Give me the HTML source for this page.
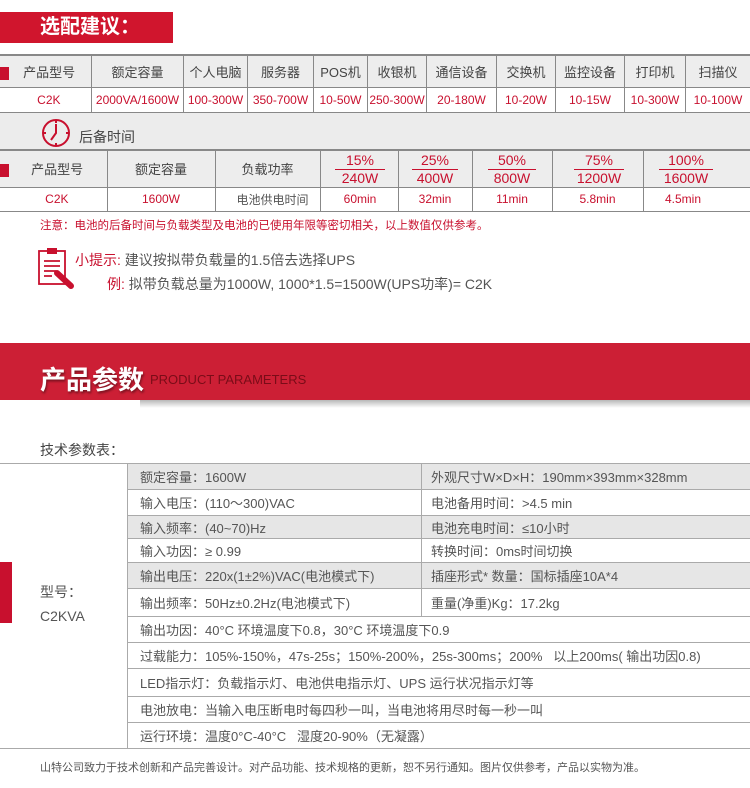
<!DOCTYPE html>
<html><head><meta charset="utf-8"><style>
*{margin:0;padding:0;box-sizing:border-box}
body{width:750px;height:788px;position:relative;background:#fff;font-family:"Liberation Sans","Noto Sans CJK SC",sans-serif;overflow:hidden;color:#555}
.a{position:absolute}
.t{position:absolute;white-space:nowrap}
.c{position:absolute;display:flex;align-items:center;justify-content:center;white-space:nowrap;border-right:1px solid #888}
.hl{position:absolute;left:0;width:750px;height:1px;background:#888}
.r{color:#c8102e}
.row{position:absolute;left:127px;border-bottom:1px solid #aaa;border-left:1px solid #aaa;font-size:13px;color:#555;display:flex;align-items:center;padding-left:12px;white-space:nowrap}
.g{background:#e6e6e6}
</style></head><body>
<div class="a" style="left:0;top:12px;width:173px;height:31px;background:#d0152d"></div>
<div class="t" style="left:40px;top:14px;font-size:20px;font-weight:bold;color:#fff;line-height:27px">选配建议：</div>

<div class="a g" style="left:0;top:55px;width:750px;height:32px;background:#ededed"></div>
<div class="hl" style="top:54px;height:2px"></div>
<div class="hl" style="top:87px"></div>
<div class="hl" style="top:112px"></div>
<div class="a" style="left:0;top:67px;width:9px;height:13px;background:#c8102e"></div>
<div style="position:absolute;top:55px;left:0;height:57px;width:750px;font-size:13px;color:#444">
<div class="c" style="left:0;width:92px;height:32px">&nbsp;&nbsp;产品型号</div>
<div class="c" style="left:92px;width:92px;height:32px">额定容量</div>
<div class="c" style="left:184px;width:64px;height:32px">个人电脑</div>
<div class="c" style="left:248px;width:66px;height:32px">服务器</div>
<div class="c" style="left:314px;width:54px;height:32px">POS机</div>
<div class="c" style="left:368px;width:59px;height:32px">收银机</div>
<div class="c" style="left:427px;width:70px;height:32px">通信设备</div>
<div class="c" style="left:497px;width:59px;height:32px">交换机</div>
<div class="c" style="left:556px;width:69px;height:32px">监控设备</div>
<div class="c" style="left:625px;width:61px;height:32px">打印机</div>
<div class="c" style="left:686px;width:64px;height:32px;border-right:0">扫描仪</div>
</div>
<div class="r" style="position:absolute;top:87px;left:0;height:25px;width:750px;font-size:12px">
<div class="c" style="left:0;width:92px;height:25px">&nbsp;&nbsp;C2K</div>
<div class="c" style="left:92px;width:92px;height:25px">2000VA/1600W</div>
<div class="c" style="left:184px;width:64px;height:25px">100-300W</div>
<div class="c" style="left:248px;width:66px;height:25px">350-700W</div>
<div class="c" style="left:314px;width:54px;height:25px">10-50W</div>
<div class="c" style="left:368px;width:59px;height:25px">250-300W</div>
<div class="c" style="left:427px;width:70px;height:25px">20-180W</div>
<div class="c" style="left:497px;width:59px;height:25px">10-20W</div>
<div class="c" style="left:556px;width:69px;height:25px">10-15W</div>
<div class="c" style="left:625px;width:61px;height:25px">10-300W</div>
<div class="c" style="left:686px;width:64px;height:25px;border-right:0">10-100W</div>
</div>

<div class="a" style="left:0;top:113px;width:750px;height:37px;background:#ececec"></div>
<svg class="a" style="left:40px;top:118px" width="32" height="30" viewBox="0 0 32 30"><circle cx="16" cy="15" r="13" fill="none" stroke="#c8102e" stroke-width="2"/><path d="M16 6V15L11 22" fill="none" stroke="#c8102e" stroke-width="2"/><path d="M16 2v3M16 25v3M3 15h3M26 15h3" stroke="#c8102e" stroke-width="2"/></svg>
<div class="t" style="left:79px;top:127px;font-size:14px;color:#444">后备时间</div>

<div class="a" style="left:0;top:150px;width:750px;height:37px;background:#ededed"></div>
<div class="hl" style="top:149px;height:2px"></div>
<div class="hl" style="top:187px"></div>
<div class="hl" style="top:211px"></div>
<div class="a" style="left:0;top:164px;width:9px;height:13px;background:#c8102e"></div>
<div style="position:absolute;top:150px;left:0;width:750px;height:37px;font-size:13px;color:#444">
<div class="c" style="left:0;width:107px;height:37px;border:0">&nbsp;&nbsp;产品型号</div>
<div class="c" style="left:107px;width:108px;height:37px;border:0">额定容量</div>
<div class="c" style="left:215px;width:105px;height:37px;border:0">负载功率</div>
</div>
<div class="a" style="left:320px;top:150px;width:1px;height:61px;background:#888"></div>
<div class="a" style="left:107px;top:150px;width:1px;height:61px;background:#888"></div>
<div class="a" style="left:215px;top:150px;width:1px;height:61px;background:#888"></div>
<div class="a" style="left:398px;top:150px;width:1px;height:61px;background:#888"></div>
<div class="a" style="left:472px;top:150px;width:1px;height:61px;background:#888"></div>
<div class="a" style="left:552px;top:150px;width:1px;height:61px;background:#888"></div>
<div class="a" style="left:643px;top:150px;width:1px;height:61px;background:#888"></div>
<div class="r" style="position:absolute;top:150px;left:0;width:750px;font-size:14px;line-height:17px;text-align:center">
<div class="a" style="left:335px;top:2px;width:50px"><div>15%</div><div style="border-top:1px solid #c8102e">240W</div></div>
<div class="a" style="left:412px;top:2px;width:46px"><div>25%</div><div style="border-top:1px solid #c8102e">400W</div></div>
<div class="a" style="left:488px;top:2px;width:48px"><div>50%</div><div style="border-top:1px solid #c8102e">800W</div></div>
<div class="a" style="left:574px;top:2px;width:50px"><div>75%</div><div style="border-top:1px solid #c8102e">1200W</div></div>
<div class="a" style="left:659px;top:2px;width:54px"><div>100%</div><div style="border-top:1px solid #c8102e">1600W</div></div>
</div>
<div class="r" style="position:absolute;top:187px;left:0;width:750px;height:24px;font-size:12px">
<div class="c" style="left:0;width:107px;height:24px;border:0">&nbsp;&nbsp;C2K</div>
<div class="c" style="left:107px;width:108px;height:24px;border:0">1600W</div>
<div class="c" style="left:215px;width:115px;height:24px;border:0;color:#555">电池供电时间</div>
<div class="c" style="left:320px;width:78px;height:24px;border:0;padding-left:2px">60min</div>
<div class="c" style="left:398px;width:74px;height:24px;border:0">32min</div>
<div class="c" style="left:472px;width:80px;height:24px;border:0">11min</div>
<div class="c" style="left:552px;width:91px;height:24px;border:0">5.8min</div>
<div class="c" style="left:643px;width:80px;height:24px;border:0">4.5min</div>
</div>
<div class="t r" style="left:40px;top:217px;font-size:11.5px">注意：电池的后备时间与负载类型及电池的已使用年限等密切相关，以上数值仅供参考。</div>

<svg class="a" style="left:37px;top:246px" width="38" height="44" viewBox="0 0 38 44"><rect x="2" y="5" width="26" height="33" fill="#fff" stroke="#c8102e" stroke-width="1.8"/><rect x="10" y="2" width="10" height="6" fill="#c8102e"/><path d="M7 15h16M7 20h16M7 25h12M7 30h8" stroke="#c8102e" stroke-width="1.8"/><path d="M20 27l14 13" stroke="#c8102e" stroke-width="6" stroke-linecap="round"/></svg>
<div class="t" style="left:75px;top:250px;font-size:14px;color:#555"><span class="r">小提示:</span> 建议按拟带负载量的1.5倍去选择UPS</div>
<div class="t" style="left:107px;top:274px;font-size:14px;color:#555"><span class="r">例:</span> 拟带负载总量为1000W, 1000*1.5=1500W(UPS功率)= C2K</div>

<div class="a" style="left:0;top:343px;width:750px;height:57px;background:#cc1f35"></div>
<div class="a" style="left:140px;top:400px;width:610px;height:8px;background:linear-gradient(#888,#fff);opacity:.6"></div>
<div class="t" style="left:40px;top:360px;font-size:26px;font-weight:bold;color:#fff;text-shadow:1px 2px 2px rgba(0,0,0,.4)">产品参数</div>
<div class="t" style="left:150px;top:372px;font-size:13px;color:#7a0c18">PRODUCT PARAMETERS</div>

<div class="t" style="left:40px;top:440px;font-size:14px;color:#444">技术参数表：</div>

<div class="hl" style="top:463px;background:#aaa"></div>
<div class="hl" style="top:748px;background:#aaa"></div>
<div class="a" style="left:0;top:562px;width:12px;height:61px;background:#c8102e"></div>
<div class="t" style="left:40px;top:580px;font-size:14px;line-height:24px;color:#555">型号：<br>C2KVA</div>
<div class="row g" style="top:464px;width:294px;height:26px">额定容量：1600W</div>
<div class="row" style="top:490px;width:294px;height:26px">输入电压：(110～300)VAC</div>
<div class="row g" style="top:516px;width:294px;height:23px">输入频率：(40~70)Hz</div>
<div class="row" style="top:539px;width:294px;height:24px">输入功因：≥ 0.99</div>
<div class="row g" style="top:563px;width:294px;height:26px">输出电压：220x(1±2%)VAC(电池模式下)</div>
<div class="row" style="top:589px;width:294px;height:28px">输出频率：50Hz±0.2Hz(电池模式下)</div>
<div class="row g" style="left:421px;top:464px;width:329px;height:26px;padding-left:9px">外观尺寸W×D×H：190mm×393mm×328mm</div>
<div class="row" style="left:421px;top:490px;width:329px;height:26px;padding-left:9px">电池备用时间：>4.5 min</div>
<div class="row g" style="left:421px;top:516px;width:329px;height:23px;padding-left:9px">电池充电时间：≤10小时</div>
<div class="row" style="left:421px;top:539px;width:329px;height:24px;padding-left:9px">转换时间：0ms时间切换</div>
<div class="row g" style="left:421px;top:563px;width:329px;height:26px;padding-left:9px">插座形式* 数量：国标插座10A*4</div>
<div class="row" style="left:421px;top:589px;width:329px;height:28px;padding-left:9px">重量(净重)Kg：17.2kg</div>
<div class="row" style="top:617px;width:623px;height:26px">输出功因：40°C 环境温度下0.8，30°C 环境温度下0.9</div>
<div class="row" style="top:643px;width:623px;height:26px">过载能力：105%-150%，47s-25s；150%-200%，25s-300ms；200%&nbsp;&nbsp;&nbsp;以上200ms( 输出功因0.8)</div>
<div class="row" style="top:669px;width:623px;height:28px">LED指示灯：负载指示灯、电池供电指示灯、UPS 运行状况指示灯等</div>
<div class="row" style="top:697px;width:623px;height:26px">电池放电：当输入电压断电时每四秒一叫，当电池将用尽时每一秒一叫</div>
<div class="row" style="top:723px;width:623px;height:25px;border-bottom:0">运行环境：温度0°C-40°C&nbsp;&nbsp;&nbsp;湿度20-90%（无凝露）</div>

<div class="t" style="left:40px;top:759px;font-size:11px;color:#555">山特公司致力于技术创新和产品完善设计。对产品功能、技术规格的更新，恕不另行通知。图片仅供参考，产品以实物为准。</div>
</body></html>
